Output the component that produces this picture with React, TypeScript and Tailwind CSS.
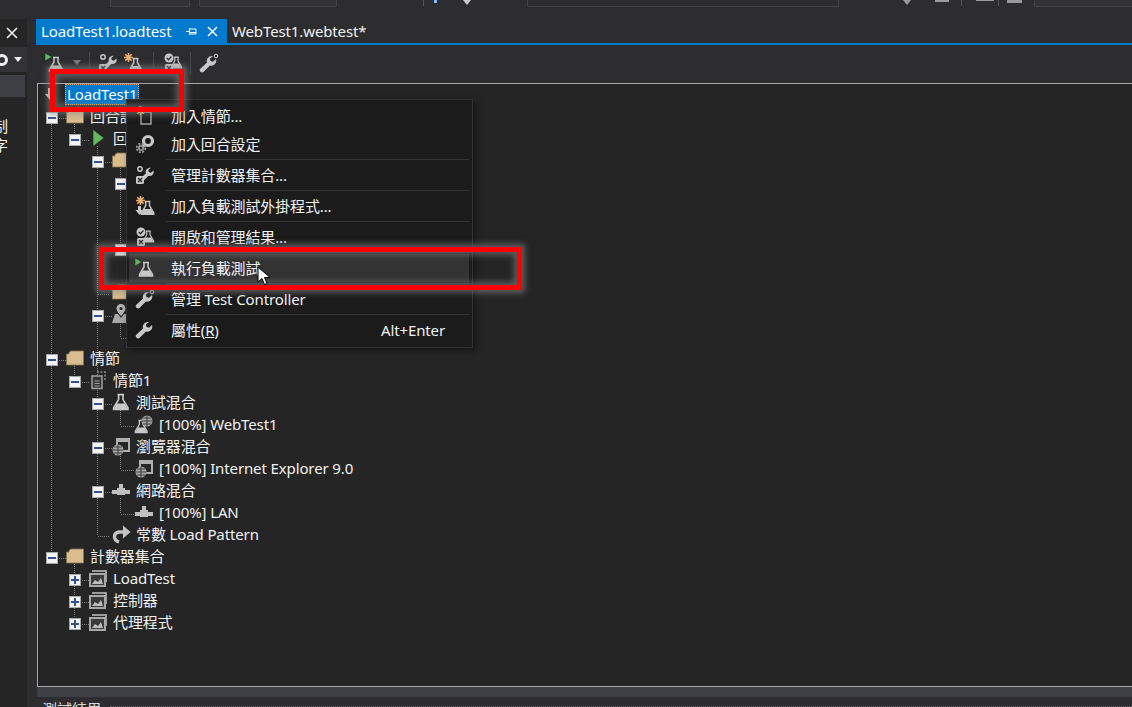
import React from 'react'

const GRAY = '#c8c8c8'

const Flask = ({ x = 0, y = 0, s = 1 }: { x?: number; y?: number; s?: number }) => (
  <g transform={`translate(${x} ${y}) scale(${s})`}>
    <path d="M5 1.500h6M6 1.500v4.500L1.500 13.500V15h13v-1.500L10 6V1.500" fill="none" stroke={GRAY} strokeWidth="1.500" />
    <path d="M4.500 9.500h7l3 5.500h-13z" fill={GRAY} />
  </g>
)

const Wrench = ({ x = 0, y = 0, s = 1 }: { x?: number; y?: number; s?: number }) => (
  <g transform={`translate(${x} ${y}) scale(${s})`}>
    <path d="M13 1a5 5 0 0 0-5 6.500L1.500 13.500a2.200 2.200 0 0 0 3.200 3.200L11 10.500A5 5 0 0 0 17 4l-3 2.800-2.500-.8-.6-2.500L14 1z" fill={GRAY} />
  </g>
)

const Star = ({ x = 0, y = 0 }: { x?: number; y?: number }) => (
  <g transform={`translate(${x} ${y})`} stroke="#e8b070" strokeWidth="1.600">
    <path d="M4.500 0v9M0 4.500h9M1.300 1.300l6.400 6.400M7.700 1.300l-6.400 6.400" />
  </g>
)

const XMark = ({ x = 0, y = 0 }: { x?: number; y?: number }) => (
  <g transform={`translate(${x} ${y})`}>
    <rect width="8" height="8" rx="1.500" fill="#c8c8c8" />
    <path d="M2 2l4 4M6 2l-4 4" stroke="#252526" strokeWidth="1.300" />
  </g>
)

const Icon = ({ children }: { children: React.ReactNode }) => (
  <svg width="20" height="20" viewBox="0 0 20 20" className="shrink-0">
    {children}
  </svg>
)

const RunIcon = () => (
  <Icon>
    <Flask x={3} y={3} />
    <path d="M0 0l7 4-7 4z" fill="#5fb85f" stroke="#1b1b1c" strokeWidth="0.500" />
  </Icon>
)

const CounterIcon = () => (
  <Icon>
    <Wrench x={4} y={2} s={0.85} />
    <circle cx="5" cy="4" r="2.200" fill="none" stroke="#c8c8c8" strokeWidth="1.500" />
    <XMark x={1} y={11} />
  </Icon>
)

const PluginIcon = ({ arrow = false }: { arrow?: boolean }) => (
  <Icon>
    <Flask x={5} y={4} s={0.95} />
    <Star x={1} y={0} />
    {arrow && <path d="M3 10h3v4h2.500l-4 5-4-5H3z" fill={GRAY} />}
  </Icon>
)

const ResultsIcon = () => (
  <Icon>
    <Flask x={7} y={3} s={0.8} />
    <circle cx="6" cy="5" r="4.500" fill={GRAY} />
    <path d="M3.800 5l1.800 1.800 2.800-3.300" stroke="#252526" fill="none" strokeWidth="1.300" />
    <XMark x={2} y={11} />
  </Icon>
)

const ScenarioGearIcon = () => (
  <Icon>
    <circle cx="13" cy="7" r="4.500" fill="none" stroke={GRAY} strokeWidth="3.200" />
    <path d="M7 9l3 3-2 2z" fill={GRAY} />
    <circle cx="6" cy="14" r="3" fill="#9a9a9a" />
    <circle cx="6" cy="14" r="4.300" fill="none" stroke="#9a9a9a" strokeWidth="1.800" strokeDasharray="2 1.400" />
    <circle cx="6" cy="14" r="1.200" fill="#1b1b1c" />
  </Icon>
)

const Folder = () => (
  <svg width="18" height="16" viewBox="0 0 18 16" className="shrink-0">
    <path d="M.5 4H3V2.500L5 1h12.500v14H.5z" fill="#d9bd8f" stroke="#8a7452" strokeWidth="0.800" />
  </svg>
)

const ChartSet = () => (
  <Icon>
    <path d="M4 2h15v12h-2V4H4z" fill="#9a9a9a" />
    <rect x="2" y="6" width="15" height="12" fill="#3a3a3a" stroke="#a8a8a8" strokeWidth="2" />
    <path d="M4 16l3-4 3 2 3-4 2 6z" fill="#bdbdbd" />
  </Icon>
)

const Browser = () => (
  <Icon>
    <path d="M5 2h14v14h-9v-2h7V6H7v3H5z" fill="#b0b0b0" />
    <circle cx="7" cy="14" r="5.500" fill="#a8a8a8" />
    <path d="M1.500 14h11M7 8.500v11M3 11h8M3 17h8" stroke="#252526" strokeWidth="0.800" />
  </Icon>
)

const Network = () => (
  <Icon>
    <path d="M8 4h4v4h2v2h5v4h-5v1H6v-1H1v-4h5V8h2z" fill="#c0c0c0" />
  </Icon>
)

const ScenarioDoc = () => (
  <Icon>
    <path d="M9 2h8v9" fill="none" stroke="#888" strokeWidth="1.500" strokeDasharray="2 1.500" />
    <rect x="4" y="6" width="10" height="12.500" fill="#333" stroke="#a0a0a0" strokeWidth="1.500" />
    <path d="M6.500 11h5M6.500 13.500h5M6.500 16h5" stroke="#a0a0a0" />
  </Icon>
)

const WebTestIcon = () => (
  <Icon>
    <Flask x={0} y={5} s={0.9} />
    <circle cx="13" cy="7" r="5.500" fill="#a8a8a8" />
    <path d="M7.500 7h11M13 1.500v11M9 4h8M9 10h8" stroke="#252526" strokeWidth="0.800" />
  </Icon>
)

const Pattern = () => (
  <svg width="20" height="20" viewBox="0 0 20 20" className="shrink-0">
    <path d="M8 18c-6-2-6-9 0-10h5" fill="none" stroke="#c4c4c4" strokeWidth="3.400" />
    <path d="M12 1.500l7.500 6.500-7.500 6.500z" fill="#c4c4c4" />
  </svg>
)

const Pin = () => (
  <Icon>
    <path d="M10 0a4.500 4.500 0 0 1 4.500 4.500C14.500 7 12 9.500 10 12 8 9.500 5.500 7 5.500 4.500A4.500 4.500 0 0 1 10 0z" fill="#b4b4b4" />
    <path d="M4 10h3l3 4 3-4h3l3 9H1z" fill="#a8a8a8" />
    <circle cx="10" cy="4.500" r="1.600" fill="#252526" />
  </Icon>
)

const Box = ({ open = true }: { open?: boolean }) => (
  <span className="relative z-10 flex h-[12px] w-[12px] shrink-0 translate-y-[2px] items-center justify-center border border-[#a8a8a8] bg-[#f4f4f4]">
    <span className="absolute h-[2px] w-[8px] bg-[#32508c]" />
    {!open && <span className="absolute h-[8px] w-[2px] bg-[#32508c]" />}
  </span>
)

type Row = { depth: number; label: string; icon?: React.ReactNode; box?: 'open' | 'closed' }

const rows: Row[] = [
  { depth: 0, label: '回合設定', icon: <Folder />, box: 'open' },
  { depth: 1, label: '回', icon: <svg width="20" height="20" viewBox="0 0 20 20"><path d="M5 1.500l11 8.500-11 8.500z" fill="#5fb85f" stroke="#1b1b1c" strokeWidth="0.500" /></svg>, box: 'open' },
  { depth: 2, label: '', icon: <Folder />, box: 'open' },
  { depth: 3, label: '', box: 'open' },
  { depth: 3, label: '' },
  { depth: 3, label: '' },
  { depth: 3, label: '', box: 'open' },
  { depth: 3, label: '' },
  { depth: 2, label: '', icon: <Folder /> },
  { depth: 2, label: '', icon: <Pin />, box: 'open' },
  { depth: 3, label: '' },
  { depth: 0, label: '情節', icon: <Folder />, box: 'open' },
  { depth: 1, label: '情節1', icon: <ScenarioDoc />, box: 'open' },
  { depth: 2, label: '測試混合', icon: <Icon><Flask x={1} y={1} s={1.1} /></Icon>, box: 'open' },
  { depth: 3, label: '[100%] WebTest1', icon: <WebTestIcon /> },
  { depth: 2, label: '瀏覽器混合', icon: <Browser />, box: 'open' },
  { depth: 3, label: '[100%] Internet Explorer 9.0', icon: <Browser /> },
  { depth: 2, label: '網路混合', icon: <Network />, box: 'open' },
  { depth: 3, label: '[100%] LAN', icon: <Network /> },
  { depth: 2, label: '常數 Load Pattern', icon: <Pattern /> },
  { depth: 0, label: '計數器集合', icon: <Folder />, box: 'open' },
  { depth: 1, label: 'LoadTest', icon: <ChartSet />, box: 'closed' },
  { depth: 1, label: '控制器', icon: <ChartSet />, box: 'closed' },
  { depth: 1, label: '代理程式', icon: <ChartSet />, box: 'closed' },
]

type MenuItem = { label: React.ReactNode; icon?: React.ReactNode; shortcut?: string; active?: boolean; sep?: boolean }

const ControllerIcon = () => (
  <Icon>
    <Wrench x={0} y={2} />
    <circle cx="17" cy="3" r="1.800" fill="none" stroke="#c8c8c8" />
  </Icon>
)

const menu: MenuItem[] = [
  { label: '加入情節...', icon: <Icon><rect x="6" y="6" width="10" height="12" fill="none" stroke="#a0a0a0" strokeWidth="1.500" /><Star x={1} y={0} /></Icon> },
  { label: '加入回合設定', icon: <ScenarioGearIcon />, sep: true },
  { label: '管理計數器集合...', icon: <CounterIcon />, sep: true },
  { label: '加入負載測試外掛程式...', icon: <PluginIcon arrow />, sep: true },
  { label: '開啟和管理結果...', icon: <ResultsIcon />, sep: true },
  { label: '執行負載測試', icon: <RunIcon />, active: true, sep: true },
  { label: '管理 Test Controller', icon: <ControllerIcon />, sep: true },
  { label: <>屬性(<span className="underline">R</span>)</>, icon: <Icon><Wrench x={0} y={1} /></Icon>, shortcut: 'Alt+Enter' },
]

const TreeRow = ({ row }: { row: Row }) => (
  <div className="flex h-[22px] items-center" style={{ paddingLeft: 8 + row.depth * 23 }}>
    <span className="flex w-[17px] shrink-0 items-center">{row.box && <Box open={row.box === 'open'} />}</span>
    <span className="flex w-[24px] shrink-0 items-center justify-center">{row.icon}</span>
    <span className="ml-[3px] whitespace-nowrap">{row.label}</span>
  </div>
)

// dotted connectors of the tree, drawn under the rows
const Connectors = () => (
  <svg className="absolute left-0 top-0" width="300" height="600">
    <g stroke="#808080" strokeDasharray="1 1" fill="none">
      <path d="M13.500 18V472M36.500 40V56M36.500 282V298M36.500 480V540" />
      <path d="M59.500 62V452M82.500 84V164M82.500 238V254M82.500 326V342M82.500 370V386M82.500 414V430" />
      <path d="M19 34.500h9M19 276.500h9M19 474.500h9" />
      <path d="M42 56.500h9M42 298.500h9M42 496.500h9M42 518.500h9M42 540.500h9" />
      <path d="M65 78.500h9M65 232.500h9M65 320.500h9M65 364.500h9M65 408.500h9M60 210.500h12M60 452.500h12" />
      <path d="M83 342.500h13M83 386.500h13M83 430.500h13M83 254.500h13" />
    </g>
  </svg>
)

const MenuPopup = () => (
  <div className="absolute left-[126px] top-[99px] z-20 w-[347px] border border-[#333337] bg-[#1b1b1c] pb-[3px] pt-[2px] shadow-[2px_2px_6px_rgba(0,0,0,0.5)]">
    {menu.map((m, i) => (
      <div key={i}>
        <div className={`ml-[2px] mr-[3px] flex h-[28px] items-center ${m.active ? 'bg-[#333334]' : ''}`}>
          <span className="flex w-[32px] shrink-0 justify-center">{m.icon}</span>
          <span className="ml-[10px] flex-1 whitespace-nowrap">{m.label}</span>
          {m.shortcut && <span className="mr-[24px]">{m.shortcut}</span>}
        </div>
        {m.sep && (
          <div className="flex h-[3px] items-center pl-[39px] pr-[3px]">
            <div className="h-px w-full bg-[#333337]" />
          </div>
        )}
      </div>
    ))}
  </div>
)

const RedBox = ({ className }: { className: string }) => (
  <div className={`absolute z-30 border-[5px] border-[#ff0000] shadow-[0_0_6px_3px_rgba(140,140,140,0.55),inset_0_0_6px_3px_rgba(140,140,140,0.55)] ${className}`} />
)

const Cursor = () => (
  <svg className="absolute left-[257px] top-[266px] z-40" width="14" height="20" viewBox="0 0 14 20">
    <path d="M1 1v15l4-3.500 2.500 6 2.500-1-2.500-6H13z" fill="#fff" stroke="#000" />
  </svg>
)

const Sep = () => <span className="h-[22px] w-px bg-[#46464a]" />

const Caret = ({ color = 'border-t-[#777]' }: { color?: string }) => (
  <span className={`block border-x-[4px] border-t-[5px] border-x-transparent ${color}`} />
)

export default function App() {
  return (
    <div
      className="relative flex h-[707px] w-[1132px] overflow-hidden bg-[#2d2d30] text-[15px] tracking-[-0.12px] text-[#f1f1f1]"
      style={{ fontFamily: '"Noto Sans", "Noto Sans CJK TC", sans-serif' }}
    >
      {/* left tool window, cut by the screenshot */}
      <div className="flex h-full w-[27px] shrink-0 flex-col overflow-hidden">
        <div className="h-[19px] shrink-0" />
        <div className="flex flex-1 flex-col bg-[#252526]">
          <div className="flex h-[28px] items-center justify-end pr-[9px]">
            <svg width="12" height="12" viewBox="0 0 12 12">
              <path d="M1 1l10 10M11 1L1 11" stroke="#f1f1f1" strokeWidth="1.600" />
            </svg>
          </div>
          <div className="flex h-[25px] items-center justify-between bg-[#333337] pr-[5px]">
            <span className="-ml-[4px] h-[12px] w-[12px] rounded-full border-[3px] border-[#f1f1f1]" />
            <Caret color="border-t-[#f1f1f1]" />
          </div>
          <div className="mt-[3px] h-[22px] w-[25px] bg-[#3f3f46]" />
          <div className="mt-[20px] -ml-[7px] leading-[19px]">
            <p>制</p>
            <p>字</p>
          </div>
        </div>
      </div>

      <div className="relative flex min-w-0 flex-1 flex-col">
        {/* top toolbar remains */}
        <div className="flex h-[19px] shrink-0 items-start">
          <div className="ml-[83px] h-[7px] w-[80px] border-x border-b border-[#434346] bg-[#333337]" />
          <div className="ml-[9px] h-[7px] w-[138px] border-x border-b border-[#434346] bg-[#333337]" />
          <span className="ml-[86px] h-[6px] w-px bg-[#555]" />
          <span className="ml-[10px] h-[3px] w-[3px] bg-[#75beff]" />
          <span className="ml-[26px]"><Caret color="border-t-[#c8c8c8]" /></span>
          <div className="ml-[56px] h-[7px] w-[312px] border-x border-b border-[#434346]" />
          <span className="ml-[64px]"><Caret color="border-t-[#999]" /></span>
          <span className="ml-[24px] h-[2px] w-[14px] bg-[#999]" />
          <span className="ml-[12px] h-[6px] w-px bg-[#555]" />
          <span className="ml-[14px] h-[1px] w-[18px] bg-[#999]" />
          <span className="ml-[4px] h-[6px] w-px bg-[#555]" />
          <span className="ml-[8px] h-[3px] w-[15px] bg-[#999]" />
          <div className="ml-[12px] h-[7px] flex-1 border-l border-b border-[#434346] bg-[#333337]" />
        </div>

        {/* document tabs */}
        <div className="ml-[9px] flex h-[24px] shrink-0 items-center">
          <div className="flex h-full w-[191px] items-center bg-[#007acc] pl-[5px] text-white">
            <span className="flex-1">LoadTest1.loadtest</span>
            <svg width="11" height="11" viewBox="0 0 11 11" className="mr-[10px]">
              <path d="M0 5.500h3.500M3.500 2v7M3.500 3h6.500v5H3.500M3.500 6.500H10" stroke="#fff" fill="none" />
            </svg>
            <svg width="11" height="11" viewBox="0 0 11 11" className="mr-[9px]">
              <path d="M1 1l9 9M10 1l-9 9" stroke="#fff" strokeWidth="1.500" />
            </svg>
          </div>
          <span className="ml-[5px] text-[#f1f1f1]">WebTest1.webtest*</span>
        </div>
        <div className="ml-[9px] h-[2px] shrink-0 bg-[#007acc]" />

        {/* editor toolbar */}
        <div className="ml-[9px] flex h-[35px] shrink-0 items-center pl-[9px]">
          <RunIcon />
          <span className="ml-[8px]"><Caret /></span>
          <span className="ml-[8px] flex"><Sep /></span>
          <span className="ml-[8px]"><CounterIcon /></span>
          <span className="ml-[5px]"><PluginIcon /></span>
          <span className="ml-[10px] flex"><Sep /></span>
          <span className="ml-[9px]"><ResultsIcon /></span>
          <span className="ml-[7px] flex"><Sep /></span>
          <span className="ml-[8px]"><ControllerIcon /></span>
        </div>

        {/* tree panel */}
        <div className="relative ml-[10px] mt-[3px] h-[604px] shrink-0 border-y border-l border-[#a8a8a8] bg-[#252526]">
          <Connectors />
          <div className="relative -mt-px">
            <div className="flex h-[22px] items-center pl-[5px]">
              <svg width="14" height="14" viewBox="0 0 14 14">
                <path d="M5 1h4v6h3l-5 6-5-6h3z" fill="#c8c8c8" />
              </svg>
              <span className="ml-[8px] flex h-[21px] items-center border border-dotted border-[#e8a050] bg-[#007acc] px-px text-white">LoadTest1</span>
            </div>
            {rows.map((r, i) => (
              <TreeRow key={i} row={r} />
            ))}
          </div>
        </div>

        <div className="ml-[10px] h-[10px] shrink-0 bg-[#3f3f46]" />
        <div className="ml-[15px] mt-[2px] flex shrink-0 items-start">
          <p className="leading-[20px] text-[#d8d8d8]">測試結果</p>
          <div className="ml-[8px] mt-[7px] flex-1 border-t border-dotted border-[#666]" />
        </div>
      </div>

      <MenuPopup />
      <RedBox className="left-[50px] top-[69px] h-[43px] w-[134px]" />
      <RedBox className="left-[99px] top-[247px] h-[43px] w-[423px]" />
      <Cursor />
    </div>
  )
}
